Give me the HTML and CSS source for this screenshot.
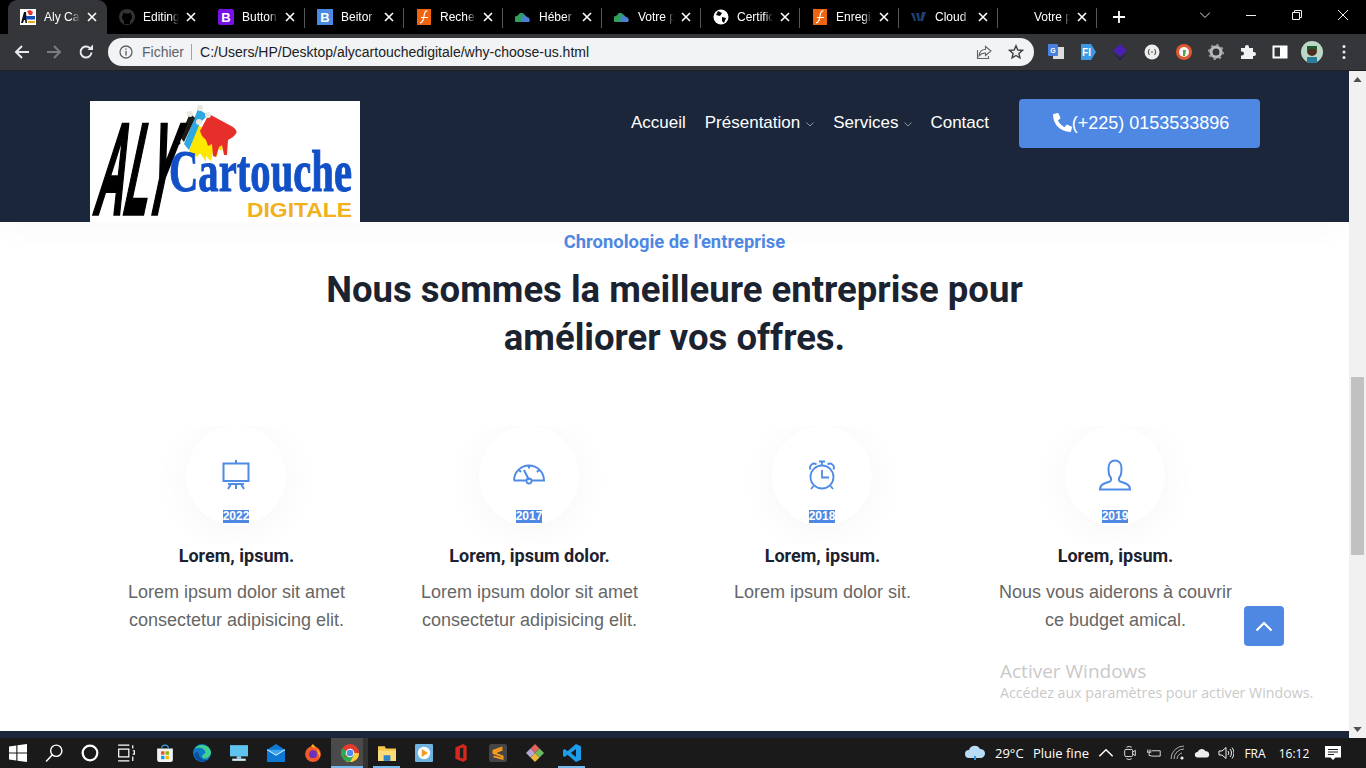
FILE: index.html
```html
<!DOCTYPE html>
<html lang="fr">
<head>
<meta charset="utf-8">
<title>Aly Cartouche Digitale</title>
<link rel="stylesheet" href="styles.css">
</head>
<body>
<svg class="defs" aria-hidden="true"><symbol id="x" viewBox="0 0 10 10"><path d="M1 1 9 9M9 1 1 9" stroke="#fff" stroke-width="1.600"/></symbol></svg>
<div class="tabstrip">
  <div class="tab active"><svg class="fav" viewBox="0 0 16 16"><rect width="16" height="16" fill="#fff"/><path d="M1 14 4 3h2l1 11H5.500L5 11H4l-1 3z" fill="#111"/><rect x="6" y="7" width="9" height="3.500" fill="#1450b8"/><rect x="8" y="12" width="7" height="2" fill="#e8a820"/><path d="M7 2l3-1 3 2-1 3H9z" fill="#e33"/></svg><span class="tab-title">Aly Ca</span><svg class="tab-x"><use href="#x"/></svg></div>
  <div class="tab"><svg class="fav" viewBox="0 0 16 16"><circle cx="8" cy="8" r="8" fill="#333"/><path d="M5 15v-3c-1-1-2-2-2-4 0-1 .3-2 1-2.500V3.500l2 1h4l2-1v2c.7.500 1 1.500 1 2.500 0 2-1 3-2 4v3z" fill="#000"/></svg><span class="tab-title">Editing</span><svg class="tab-x"><use href="#x"/></svg></div>
  <div class="tab"><svg class="fav" viewBox="0 0 16 16"><rect width="16" height="16" rx="2" fill="#7a10e8"/><text x="8" y="12.500" class="favb">B</text></svg><span class="tab-title">Button</span><svg class="tab-x"><use href="#x"/></svg></div>
  <div class="tab"><svg class="fav" viewBox="0 0 16 16"><rect width="16" height="16" fill="#4a8ae0"/><text x="8" y="12.500" class="favb">B</text></svg><span class="tab-title">Beitor</span><svg class="tab-x"><use href="#x"/></svg></div>
  <div class="tab"><svg class="fav" viewBox="0 0 16 16"><path d="M1 0h14v16H1z" fill="#f0640f"/><path d="M11.500 2C9 1.500 8.500 4 8 7S7.500 13 4 14M5 8.500h7" fill="none" stroke="#fff" stroke-width="1.200"/></svg><span class="tab-title">Recher</span><svg class="tab-x"><use href="#x"/></svg></div>
  <div class="tab"><svg class="fav" viewBox="0 0 16 16"><path d="M2 13a3 3 0 0 1 0-6l3-3h3l2 4-3 5z" fill="#2f9e5f"/><path d="M6 13l3-8 3 3a3 3 0 0 1 2 5z" fill="#4a7fd8"/></svg><span class="tab-title">Héber</span><svg class="tab-x"><use href="#x"/></svg></div>
  <div class="tab"><svg class="fav" viewBox="0 0 16 16"><path d="M2 13a3 3 0 0 1 0-6l3-3h3l2 4-3 5z" fill="#2f9e5f"/><path d="M6 13l3-8 3 3a3 3 0 0 1 2 5z" fill="#4a7fd8"/></svg><span class="tab-title">Votre p</span><svg class="tab-x"><use href="#x"/></svg></div>
  <div class="tab"><svg class="fav" viewBox="0 0 16 16"><circle cx="8" cy="8" r="7.500" fill="#fff"/><path d="M5 2 9 4 7 7 3 6zM9 8l4 1-2 5-2-2z" fill="#000"/></svg><span class="tab-title">Certific</span><svg class="tab-x"><use href="#x"/></svg></div>
  <div class="tab"><svg class="fav" viewBox="0 0 16 16"><path d="M1 0h14v16H1z" fill="#f0640f"/><path d="M11.500 2C9 1.500 8.500 4 8 7S7.500 13 4 14M5 8.500h7" fill="none" stroke="#fff" stroke-width="1.200"/></svg><span class="tab-title">Enregis</span><svg class="tab-x"><use href="#x"/></svg></div>
  <div class="tab"><svg class="fav" viewBox="0 0 16 16"><path d="M0 4h3l2 8H3zM5 4h3l1 8H7zM11 3h4l-3 9h-3z" fill="#1d3f70"/></svg><span class="tab-title">Cloud</span><svg class="tab-x"><use href="#x"/></svg></div>
  <div class="tab"><span class="fav"></span><span class="tab-title">Votre p</span><svg class="tab-x"><use href="#x"/></svg></div>
  <div class="newtab"><svg viewBox="0 0 12 12"><path d="M6 0v12M0 6h12" stroke="#fff" stroke-width="1.800"/></svg></div>
  <div class="winctl">
    <span class="wc"><svg viewBox="0 0 10 10"><path d="M0 2.500 5 7.500 10 2.500" fill="none" stroke="#ddd"/></svg></span>
    <span class="wc"><svg viewBox="0 0 10 10"><path d="M0 5.500h10" stroke="#eee"/></svg></span>
    <span class="wc"><svg viewBox="0 0 10 10"><path d="M.5 2.500h7v7h-7zM2.500 2.500v-2h7v7h-2" fill="none" stroke="#eee"/></svg></span>
    <span class="wc"><svg viewBox="0 0 10 10"><path d="M0 0 10 10M10 0 0 10" stroke="#eee"/></svg></span>
  </div>
</div>

<div class="toolbar">
  <span class="tool"><svg viewBox="0 0 16 16"><path d="M15 8H2M8 2 2 8l6 6" fill="none" stroke="#e8eaed" stroke-width="2"/></svg></span>
  <span class="tool"><svg viewBox="0 0 16 16"><path d="M1 8h13M8 2l6 6-6 6" fill="none" stroke="#7b7c7f" stroke-width="2"/></svg></span>
  <span class="tool"><svg viewBox="0 0 16 16"><path d="M13.500 8.500A5.500 5.500 0 1 1 11.800 4" fill="none" stroke="#e8eaed" stroke-width="2"/><path d="M9.500 6H15V.5z" fill="#e8eaed"/></svg></span>
  <div class="omnibox">
    <svg class="omni-info" viewBox="0 0 14 14"><circle cx="7" cy="7" r="6" fill="none" stroke="#5f6368" stroke-width="1.300"/><path d="M7 6v4.500M7 3.500v1.300" stroke="#5f6368" stroke-width="1.400"/></svg>
    <span class="omni-scheme">Fichier</span>
    <span class="omni-div"></span>
    <span class="omni-url">C:/Users/HP/Desktop/alycartouchedigitale/why-choose-us.html</span>
    <svg class="omni-share" viewBox="0 0 16 16"><path d="M9.500 2.500 15 7l-5.500 4.500V9C6 9 4.500 10 3 12c.3-4 2.500-6.500 6.500-6.800zM1.500 6v8.500h11V12" fill="none" stroke="#5f6368" stroke-width="1.100"/></svg>
    <svg class="omni-star" viewBox="0 0 16 16"><path d="M8 1.800 9.800 6l4.600.4-3.500 3 1 4.500L8 11.500l-3.900 2.400 1-4.500-3.500-3L6.200 6z" fill="none" stroke="#3c4043" stroke-width="1.400"/></svg>
  </div>
  <div class="exts">
    <span class="ext"><svg viewBox="0 0 16 16"><rect x="5" y="3" width="11" height="12" fill="#ddd"/><rect width="10" height="12" rx="1" fill="#4a80dd"/><text x="5" y="9" class="exttxt">G</text></svg></span>
    <span class="ext"><svg viewBox="0 0 16 16"><path d="M1 0h10l5 8-5 8H1z" fill="#3d9be6"/><text x="6.500" y="12" class="extf">FI</text></svg></span>
    <span class="ext"><svg viewBox="0 0 16 16"><path d="M8 0l7 7-7 5-7-5z" fill="#4a1fb8"/><path d="M1 9l7 7 7-7-7 5z" fill="#2d1270"/></svg></span>
    <span class="ext"><svg viewBox="0 0 16 16"><circle cx="8" cy="8" r="7.500" fill="#eee"/><path d="M5.500 5C4 7 4 9 5.500 11M10.500 5c1.500 2 1.500 4 0 6M7 8h2" fill="none" stroke="#555" stroke-width="1.100"/></svg></span>
    <span class="ext"><svg viewBox="0 0 16 16"><circle cx="8" cy="8" r="8" fill="#de5833"/><circle cx="8" cy="8" r="5" fill="#f5f5f5"/><path d="M7 6h3l-1 6H7z" fill="#5b9e4d"/></svg></span>
    <span class="ext"><svg viewBox="0 0 16 16"><circle cx="8" cy="8" r="5" fill="none" stroke="#bbb" stroke-width="3"/><circle cx="8" cy="8" r="7" fill="none" stroke="#999" stroke-width="2" stroke-dasharray="2.500 3"/></svg></span>
    <span class="ext"><svg viewBox="0 0 16 16"><path d="M1 4h4V3a2 2 0 0 1 4 0v1h4v4h1a2 2 0 0 1 0 4h-1v3H1v-3.500h1a2 2 0 0 0 0-4H1z" fill="#f1f3f4"/></svg></span>
    <span class="ext"><svg viewBox="0 0 16 16"><rect x="1.500" y="2.500" width="13" height="11" fill="none" stroke="#fff" stroke-width="2"/><rect x="8" y="3" width="6" height="10" fill="#fff"/></svg></span>
    <span class="ext"><svg class="avatar" viewBox="0 0 22 22"><circle cx="11" cy="11" r="11" fill="#bcd8c8"/><rect x="6" y="16" width="10" height="6" fill="#2a7d9c"/><circle cx="11" cy="10" r="5" fill="#4a2f20"/><rect x="6" y="5" width="10" height="3" fill="#1f5c2a"/></svg></span>
    <span class="ext"><svg class="kebab" viewBox="0 0 4 16"><circle cx="2" cy="2.500" r="1.500" fill="#e8eaed"/><circle cx="2" cy="8" r="1.500" fill="#e8eaed"/><circle cx="2" cy="13.500" r="1.500" fill="#e8eaed"/></svg></span>
  </div>
</div>

<div class="viewport">
  <main class="page">
    <header class="site-header">
      <svg class="logo" viewBox="0 0 270 121">
        <rect width="270" height="121" fill="#fff"/>
        <path d="M108 24 121 32 134 40 132 50 128 48 127 56 123 50 121 60 116 55 116 61 110 52 107 56 99 50z" fill="#ffe800"/>
        <path d="M108 8 118 14 110 22 99 49 94 43z" fill="#2ea8e0"/>
        <path d="M100 12 105 17 94 41 90 36z" fill="#1e1a16"/>
        <circle cx="89" cy="42" r="1.500" fill="#1e1a16"/>
        <path d="M119 13 143 26Q147 29 146.500 32L143 36 138 39 137 54 134 54 132 44 129 46 126 56 123 55 122 43 118 45 116 39 112 35 110 30z" fill="#e62e2b"/>
        <circle cx="100" cy="13" r="3" fill="#e8e8e0"/><circle cx="110" cy="7" r="3" fill="#e8e8e0"/><circle cx="118" cy="14" r="3" fill="#e8e8e0"/><circle cx="109" cy="21" r="3" fill="#e8e8e0"/>
        <text class="logo-aly" transform="translate(2 113) skewX(-12)" textLength="76" lengthAdjust="spacingAndGlyphs">ALY</text>
        <text x="79" y="90" class="logo-cart" textLength="183" lengthAdjust="spacingAndGlyphs">Cartouche</text>
        <text x="157" y="116" class="logo-dig" textLength="105" lengthAdjust="spacingAndGlyphs">DIGITALE</text>
      </svg>
      <nav class="nav">
        <a class="nav-link">Accueil</a>
        <a class="nav-link">Présentation<svg class="caret" viewBox="0 0 8 5"><path d="M.5.5 4 4 7.500.5" fill="none" stroke="#8a93a3"/></svg></a>
        <a class="nav-link">Services<svg class="caret" viewBox="0 0 8 5"><path d="M.5.5 4 4 7.500.5" fill="none" stroke="#8a93a3"/></svg></a>
        <a class="nav-link">Contact</a>
        <a class="cta"><svg class="phone" viewBox="0 0 512 512"><path d="M497.390 361.800l-112-48a24 24 0 0 0-28 6.900l-49.600 60.600A370.660 370.660 0 0 1 130.600 204.110l60.600-49.600a23.940 23.940 0 0 0 6.900-28l-48-112A24.160 24.160 0 0 0 122.600.610l-104 24A24 24 0 0 0 0 48c0 256.500 207.900 464 464 464a24 24 0 0 0 23.400-18.600l24-104a24.290 24.290 0 0 0-14.010-27.600z" fill="#fff"/></svg>(+225) 0153533896</a>
      </nav>
    </header>

    <section class="timeline">
      <p class="eyebrow">Chronologie de l'entreprise</p>
      <h2 class="headline">Nous sommes la meilleure entreprise pour<br>améliorer vos offres.</h2>
      <div class="grid">
        <article class="item">
          <div class="halo"><div class="circle">
            <svg class="ico" viewBox="0 0 32 32"><path d="M3.500 4.500h25V22h-25zM16 1v3.500M8 25h16M16 25v5M11 25l-3 5M21 25l3 5" fill="none" stroke="#4f8ae6" stroke-width="2"/></svg>
            <span class="year">2022</span>
          </div></div>
          <h3 class="item-title">Lorem, ipsum.</h3>
          <p class="item-text">Lorem ipsum dolor sit amet consectetur adipisicing elit.</p>
        </article>
        <article class="item">
          <div class="halo"><div class="circle">
            <svg class="ico" viewBox="0 0 32 32"><path d="M1 21.500A15 15 0 0 1 31 21.500H18.500M13.500 21.500H1M16 21 11 11M16 6.500v3M6 11l2 2M26 11l-2 2" fill="none" stroke="#4f8ae6" stroke-width="2"/><circle cx="16" cy="22" r="2.500" fill="none" stroke="#4f8ae6" stroke-width="1.800"/></svg>
            <span class="year">2017</span>
          </div></div>
          <h3 class="item-title">Lorem, ipsum dolor.</h3>
          <p class="item-text">Lorem ipsum dolor sit amet consectetur adipisicing elit.</p>
        </article>
        <article class="item">
          <div class="halo"><div class="circle">
            <svg class="ico" viewBox="0 0 32 32"><circle cx="16" cy="18" r="11.500" fill="none" stroke="#4f8ae6" stroke-width="1.800"/><path d="M16 11v7.500h7M13 2.500h6M16 2.500v4M4.500 10.500a4 4 0 0 1 6-5M27.500 10.500a4 4 0 0 0-6-5M7.500 27l-2.500 3M24.500 27l2.500 3" fill="none" stroke="#4f8ae6" stroke-width="1.800"/></svg>
            <span class="year">2018</span>
          </div></div>
          <h3 class="item-title">Lorem, ipsum.</h3>
          <p class="item-text">Lorem ipsum dolor sit.</p>
        </article>
        <article class="item">
          <div class="halo"><div class="circle">
            <svg class="ico" viewBox="0 0 32 32"><path d="M1 30.500H31C31 25 25.500 24 21 22.500 19.500 21.500 19.500 19 21 17.500 22.500 15.500 22.500 12.500 22.500 9 22.500 4 19.500 1.500 16 1.500S9.500 4 9.500 9C9.500 12.500 9.500 15.500 11 17.500 12.500 19 12.500 21.500 11 22.500 6.500 24 1 25 1 30.500z" fill="none" stroke="#4f8ae6" stroke-width="2"/></svg>
            <span class="year">2019</span>
          </div></div>
          <h3 class="item-title">Lorem, ipsum.</h3>
          <p class="item-text">Nous vous aiderons à couvrir ce budget amical.</p>
        </article>
      </div>
    </section>
    <footer class="site-footer"></footer>
    <a class="to-top"><svg viewBox="0 0 18 11"><path d="M1.500 9.500 9 2l7.500 7.500" fill="none" stroke="#fff" stroke-width="2.200"/></svg></a>
    <div class="activate">
      <div class="activate-h">Activer Windows</div>
      <div class="activate-s">Accédez aux paramètres pour activer Windows.</div>
    </div>
  </main>
  <div class="scrollbar">
    <svg class="sb-arrow" viewBox="0 0 10 6"><path d="M5 0 10 6H0z" fill="#505050"/></svg>
    <div class="sb-track"><div class="sb-thumb"></div></div>
    <svg class="sb-arrow" viewBox="0 0 10 6"><path d="M5 6 10 0H0z" fill="#505050"/></svg>
  </div>
</div>

<div class="taskbar">
  <span class="tb first"><svg viewBox="0 0 16 16"><path d="M0 2.300 6.500 1.400V7.500H0zM7.500 1.200 16 0V7.500H7.500zM0 8.500H6.500V14.600L0 13.700zM7.500 8.500H16V16L7.500 14.800z" fill="#fff"/></svg></span>
  <span class="tb"><svg viewBox="0 0 16 16"><circle cx="10" cy="6" r="5" fill="none" stroke="#fff" stroke-width="1.300"/><path d="M6.500 9.500 1 15.500" stroke="#fff" stroke-width="1.300"/></svg></span>
  <span class="tb"><svg viewBox="0 0 16 16"><circle cx="8" cy="8" r="6.500" fill="none" stroke="#fff" stroke-width="2"/></svg></span>
  <span class="tb gapafter"><svg viewBox="0 0 16 16"><path d="M1 1h10M1 15h10M1.500 4.500h9v7h-9zM14 1v3M14 6h1.500v3H14M14 11v4" fill="none" stroke="#fff" stroke-width="1.100"/></svg></span>
  <span class="tb"><svg viewBox="0 0 16 16"><path d="M1 4h14v10a2 2 0 0 1-2 2H3a2 2 0 0 1-2-2z" fill="#f2f2f2"/><path d="M5 4a3 3 0 0 1 6 0" fill="none" stroke="#3aa0e0"/><rect x="4.500" y="6.500" width="3" height="3" fill="#f25022"/><rect x="8.500" y="6.500" width="3" height="3" fill="#7fba00"/><rect x="4.500" y="10.500" width="3" height="3" fill="#00a4ef"/><rect x="8.500" y="10.500" width="3" height="3" fill="#ffb900"/></svg></span>
  <span class="tb"><svg viewBox="0 0 16 16"><circle cx="8" cy="8" r="8" fill="#0d78c8"/><path d="M16 8.500A8 8 0 0 0 1 5c3-3 9-2 10 2 .5 2-3 2-3 4 0 2 5 4 8-2.500z" fill="#3fcf8e"/><path d="M5 8c0 4 4 7 8 6-4 3-11 1-12-5 1-2 3-2 4-1z" fill="#0a4f9e"/></svg></span>
  <span class="tb"><svg viewBox="0 0 16 16"><rect y="1" width="16" height="10" fill="#5fc3ef"/><rect x="6" y="11" width="4" height="2" fill="#9fd9f2"/><rect x="2" y="13" width="12" height="2" fill="#cfe8f5"/></svg></span>
  <span class="tb"><svg viewBox="0 0 16 16"><path d="M0 5 8 0l8 5v11H0z" fill="#0f78d4"/><path d="M0 5l8 5 8-5" fill="#3aa6ee" stroke="#fff" stroke-width=".8"/></svg></span>
  <span class="tb"><svg viewBox="0 0 16 16"><circle cx="8" cy="9" r="7" fill="#f25a2a"/><path d="M6 2 8 0l3 4c3 2 4 5 3 8L11 4z" fill="#ffb11a"/><circle cx="8" cy="9" r="3.500" fill="#6b2fc0"/></svg></span>
  <span class="tb running active-app"><svg viewBox="0 0 16 16"><circle cx="8" cy="8" r="8" fill="#e33b2e"/><path d="M8 8 1 12A8 8 0 0 1 1 4z" fill="#2da94f"/><path d="M8 8h8a8 8 0 0 1-12 7z" fill="#ffcd3f"/><path d="M1 12A8 8 0 0 0 8 16L12 9z" fill="#2da94f"/><circle cx="8" cy="8" r="3.800" fill="#fff"/><circle cx="8" cy="8" r="2.900" fill="#4a8cf0"/></svg></span>
  <span class="tb running"><svg viewBox="0 0 16 16"><path d="M0 2h6l1 2h9v11H0z" fill="#f5c84c"/><rect y="6" width="16" height="9" fill="#fbdc7a"/><rect x="5" y="10" width="6" height="5" fill="#2a86c8"/></svg></span>
  <span class="tb"><svg viewBox="0 0 16 16"><rect width="16" height="16" rx="1" fill="#6fb4df"/><circle cx="8" cy="8" r="5.500" fill="#fff"/><path d="M6 4.500 11.500 8 6 11.500z" fill="#f49a1e"/></svg></span>
  <span class="tb"><svg viewBox="0 0 16 16"><path d="M3 3 10 0l3 2v12l-3 2-7-3z" fill="#d6281e"/><path d="M7 4v8l3 1V3z" fill="#1e1e1e"/></svg></span>
  <span class="tb"><svg viewBox="0 0 16 16"><rect width="16" height="16" rx="2" fill="#454545"/><path d="M12 3 4 6v2l8 3v2l-8-2M4 8l8-3" fill="none" stroke="#f99b1c" stroke-width="1.800"/></svg></span>
  <span class="tb"><svg viewBox="0 0 16 16"><path d="M8 0l4 4-4 4-4-4z" fill="#e0645c"/><path d="M4 4l4 4-4 4-4-4z" fill="#b6a6d8"/><path d="M12 4l4 4-4 4-4-4z" fill="#6dbb5f"/><path d="M8 8l4 4-4 4-4-4z" fill="#e8b83c"/></svg></span>
  <span class="tb running"><svg viewBox="0 0 16 16"><path d="M11.500 0 16 2v12l-4.500 2L4 9.500 1.500 11.500 0 10.500V5.500L1.500 4.500 4 6.500z" fill="#1f9ce8"/><path d="M11.500 4.500 7 8l4.500 3.500z" fill="#1a1a1a"/></svg></span>

  <div class="tray">
    <svg class="tray-weather" viewBox="0 0 22 16"><path d="M5 13a4 4 0 0 1 0-8 6 6 0 0 1 11-1 4.500 4.500 0 0 1 1 9z" fill="#b9dcf6"/><path d="M11 11v4" stroke="#3a95e0" stroke-width="2"/></svg>
    <span class="tray-text temp">29°C</span>
    <span class="tray-text cond">Pluie fine</span>
    <span class="tc"><svg viewBox="0 0 12 8"><path d="M1 6.500 6 1.500l5 5" fill="none" stroke="#fff" stroke-width="1.100"/></svg></span>
    <span class="tc"><svg viewBox="0 0 16 18"><rect x="2" y="5" width="9" height="8" rx="1.500" fill="none" stroke="#eee"/><path d="M11 8l3-2v6l-3-2M4 2.500a6 6 0 0 1 6 0M4 15.500a6 6 0 0 0 6 0" fill="none" stroke="#eee"/></svg></span>
    <span class="tc"><svg viewBox="0 0 18 12"><path d="M6 3.500h10v6H6M2 2v3M4.500 2v3M1 5h5M3.500 5v4h2.500" fill="none" stroke="#eee"/></svg></span>
    <span class="tc"><svg viewBox="0 0 16 16"><path d="M1 14A13 13 0 0 1 14 1M4 14A10 10 0 0 1 14 4M7 14a7 7 0 0 1 5-6" fill="none" stroke="#aaa"/><circle cx="12" cy="13" r="1.600" fill="#eee"/></svg></span>
    <span class="tc"><svg viewBox="0 0 18 12"><path d="M4 11a3 3 0 0 1 0-6 5 5 0 0 1 9-1 3.500 3.500 0 0 1 1 7z" fill="#eee"/></svg></span>
    <span class="tc"><svg viewBox="0 0 16 16"><path d="M1 6h3l4-3.500v11L4 10H1zM10 6a3 3 0 0 1 0 4M12 4a6 6 0 0 1 0 8M14 2.500a8.500 8.500 0 0 1 0 11" fill="none" stroke="#eee"/></svg></span>
    <span class="tray-text lang">FRA</span>
    <span class="tray-text clock">16:12</span>
    <span class="notif"><svg viewBox="0 0 16 16"><path d="M0 1h16v11.500H10.500L8 15l-2.500-2.500H0z" fill="#fff"/><path d="M3 4.500h10M3 7h10M3 9.500h6" stroke="#1a1a1a"/></svg></span>
  </div>
</div>
</body>
</html>
```

FILE: styles.css
```css
* { box-sizing: border-box; }
html, body { margin: 0; height: 100%; overflow: hidden; }
body { display: flex; flex-direction: column; width: 1366px; height: 768px; font-family: "Liberation Sans", Arial, sans-serif; background: #fff; }
svg { display: block; }
.defs { width: 0; height: 0; position: absolute; }

/* browser tabs */
.tabstrip { display: flex; align-items: stretch; height: 34px; padding-left: 8px; background: #000; flex: none; }
.tab { position: relative; display: flex; align-items: center; width: 99px; padding-left: 12px; color: #fff; font: 12px "Liberation Sans", Arial, sans-serif; }
.tab::after { content: ""; position: absolute; right: 0; top: 8px; height: 20px; width: 1px; background: #55565a; }
.tab.active { background: #35363a; border-radius: 9px 9px 0 0; }
.tab.active::after { display: none; }
.tab:nth-child(2)::after { display: none; }
.fav { width: 16px; height: 16px; flex: none; margin-right: 8px; }
.favb { font: 700 13px "Liberation Sans", sans-serif; fill: #fff; text-anchor: middle; }
.tab-title { width: 36px; overflow: hidden; white-space: nowrap; flex: none; -webkit-mask-image: linear-gradient(90deg, #000 75%, transparent); mask-image: linear-gradient(90deg, #000 75%, transparent); }
.tab-x { width: 10px; height: 10px; margin-left: 7px; flex: none; }
.newtab { width: 44px; display: flex; align-items: center; justify-content: center; }
.newtab svg { width: 12px; height: 12px; }
.winctl { display: flex; margin-left: auto; }
.wc { width: 46px; display: flex; align-items: center; justify-content: center; padding-bottom: 4px; }
.wc svg { width: 10px; height: 10px; }

/* toolbar */
.toolbar { display: flex; align-items: center; height: 37px; padding: 0 0 1px 6px; background: #35363a; border-bottom: 1px solid #202124; flex: none; }
.tool { width: 32px; display: flex; justify-content: center; }
.tool svg { width: 16px; height: 16px; }
.omnibox { display: flex; align-items: center; width: 926px; height: 28px; margin-left: 6px; padding-left: 11px; background: #f1f3f4; border-radius: 14px; font: 14px "Liberation Sans", Arial, sans-serif; }
.omni-info { width: 14px; height: 14px; }
.omni-scheme { margin-left: 9px; color: #5f6368; }
.omni-div { width: 1px; height: 16px; margin: 0 8px 0 7px; background: #a0a3a7; }
.omni-url { color: #202124; flex: 1; white-space: nowrap; }
.omni-share { width: 16px; height: 16px; margin-right: 16px; }
.omni-star { width: 16px; height: 16px; margin-right: 10px; }
.exts { display: flex; margin-left: 6px; }
.ext { width: 32px; display: flex; align-items: center; justify-content: center; }
.ext svg { width: 16px; height: 16px; }
.ext .avatar { width: 22px; height: 22px; }
.ext .kebab { width: 4px; height: 16px; }
.exttxt { font: 700 7px "Liberation Sans", sans-serif; fill: #fff; text-anchor: middle; }
.extf { font: 700 10px "Liberation Sans", sans-serif; fill: #fff; text-anchor: middle; }

/* page */
.viewport { display: flex; flex: 1; min-height: 0; }
.page { position: relative; flex: 1; display: flex; flex-direction: column; background: #fff; overflow: hidden; }
.site-header { display: flex; align-items: flex-start; height: 151px; padding: 28px 89px 0 90px; background: #1b263a; box-shadow: 0 4px 30px rgba(0,0,0,.03); flex: none; position: relative; }
.logo { width: 270px; height: 121px; margin-top: 2px; }
.logo-aly { font: 700 130px "Liberation Sans", sans-serif; fill: #000; stroke: #000; stroke-width: 3.500px; }
.logo-cart { font: 700 60px "Liberation Serif", serif; fill: #1150c6; stroke: #1150c6; stroke-width: 1px; }
.logo-dig { font: 700 21px "Liberation Sans", sans-serif; fill: #f0b11c; }
.nav { display: flex; align-items: center; margin-left: auto; }
.nav-link { display: flex; align-items: center; color: #fff; font-size: 17px; margin-right: 19px; height: 49px; padding-bottom: 2px; }
.nav-link:nth-child(3) { margin-right: 18px; }
.nav-link:nth-child(4) { margin-right: 30px; }
.caret { width: 8px; height: 5px; margin: 3px 0 0 6px; }
.cta { display: flex; align-items: center; justify-content: center; width: 241px; height: 49px; padding-left: 3px; background: #4f88e3; border-radius: 4px; color: #fff; font-size: 18px; }
.phone { width: 19px; height: 19px; margin-top: -3px; }

.timeline { flex: 1; text-align: center; }
.eyebrow { margin: 9px 0 0; font: 700 18.400px/22px Roboto, sans-serif; color: #4f88e3; }
.headline { margin: 13px 0 0; font: 700 36.500px/48px Roboto, sans-serif; color: #1b2230; }
.grid { display: grid; grid-template-columns: repeat(4, 293px); margin: 64px 0 0 90px; }
.item { padding: 0 20px; }
.halo { width: 176px; height: 118px; margin: 0 auto; overflow: hidden; display: flex; justify-content: center; }
.circle { position: relative; width: 100px; height: 100px; margin-right: 1px; border-radius: 50%; background: #fff; box-shadow: 0 5px 40px rgba(0,0,0,.045); display: flex; flex-direction: column; align-items: center; padding-top: 33px; flex: none; }
.ico { width: 32px; height: 32px; }
.year { margin-top: 19px; background: #4f88e3; color: #fff; font: 700 12px/13px "Liberation Sans", sans-serif; }
.item-title { margin: 0; font: 700 18px/24px Roboto, sans-serif; color: #1b2230; }
.item-text { margin: 10px 0 0; font-size: 18px; line-height: 28px; color: #666; }
.site-footer { height: 7px; background: #1b263a; flex: none; }
.to-top { position: absolute; left: 1244px; top: 535px; width: 40px; height: 40px; border-radius: 4px; background: #4f88e3; display: flex; align-items: center; justify-content: center; }
.to-top svg { width: 18px; height: 11px; }
.activate { position: absolute; left: 1000px; top: 587px; font-family: "Open Sans", sans-serif; color: #c9c9c9; }
.activate-h { font-size: 19px; line-height: 26px; }
.activate-s { font-size: 14.200px; line-height: 18px; }

/* scrollbar */
.scrollbar { width: 17px; background: #f1f1f1; display: flex; flex-direction: column; align-items: center; flex: none; padding: 6px 0; }
.sb-arrow { width: 9px; height: 5px; flex: none; }
.sb-track { flex: 1; width: 100%; padding-top: 295px; }
.sb-thumb { width: 13px; height: 178px; margin: 0 auto; background: #c1c1c1; }

/* taskbar */
.taskbar { display: flex; align-items: stretch; height: 30px; background: #1a1a1a; flex: none; }
.tb { position: relative; width: 37px; display: flex; align-items: center; justify-content: center; }
.tb svg { width: 18px; height: 18px; }
.tb.first { width: 36px; }
.taskbar .tb:nth-child(2), .taskbar .tb:nth-child(3), .taskbar .tb:nth-child(4) { width: 36px; }
.tb.gapafter { margin-right: 2px; }
.tb.running::after { content: ""; position: absolute; left: 5px; right: 5px; bottom: 0; height: 2px; background: #76b9ed; }
.tb.active-app { background: linear-gradient(90deg, #4a4a4a 86%, #333 86%); }
.tb.active-app::after { left: 0; right: 5px; }
.tray { display: flex; align-items: center; margin-left: auto; color: #fff; font: 13px "Open Sans", sans-serif; }
.tray-weather { width: 22px; height: 16px; margin-right: 9px; }
.tray-text { white-space: nowrap; }
.temp { width: 38px; }
.cond { width: 61px; }
.tc { width: 24px; display: flex; justify-content: center; }
.tc svg { width: 16px; height: 16px; }
.lang { width: 34px; text-align: center; font-size: 12px; }
.clock { width: 44px; text-align: center; font-size: 12px; }
.notif { width: 34px; margin-right: 16px; display: flex; justify-content: center; }
.notif svg { width: 16px; height: 16px; }
```
